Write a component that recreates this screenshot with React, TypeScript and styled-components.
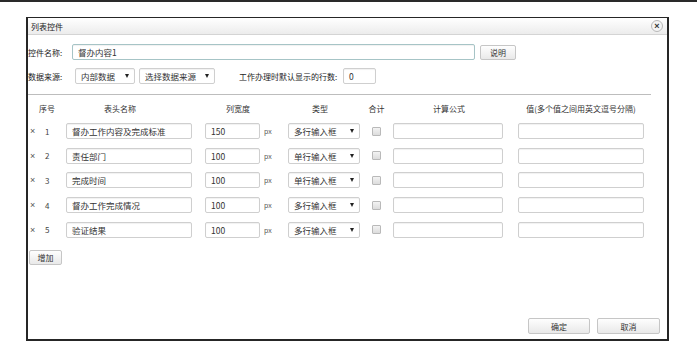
import styled, { createGlobalStyle, css } from 'styled-components';

const GlobalStyle = createGlobalStyle`
    html, body {
        margin: 0;
        padding: 0;
        background: #fff;
    }

    body {
        font-family: "Noto Sans CJK SC", "Liberation Sans", sans-serif;
        font-size: 8px;
        color: #333;
    }
`;

const Page = styled.div`
    width: 697px;
    height: 342px;
    box-sizing: border-box;
    border-top: 2px solid #2a2a2a;
    padding: 15px 0 0 26px;
    overflow: hidden;
`;

const Dialog = styled.div`
    display: flex;
    flex-direction: column;
    width: 643px;
    height: 324px;
    box-sizing: border-box;
    border: 2px solid #262626;
    border-top-width: 1px;
    background: #fff;
`;

const TitleBar = styled.div`
    display: flex;
    align-items: center;
    justify-content: space-between;
    height: 16px;
    padding: 0 4px 0 3px;
    background: linear-gradient(#ffffff, #ececec);
    border-bottom: 1px solid #d4d4d4;
`;

const Title = styled.span`
    font-size: 8px;
    color: #222;
`;

const CloseButton = styled.span`
    display: flex;
    align-items: center;
    justify-content: center;
    width: 10px;
    height: 10px;
    border: 1px solid #b8b8b8;
    border-radius: 50%;
    background: #f4f4f4;
    color: #333;
    font-family: "Liberation Sans", sans-serif;
    font-size: 9px;
    font-weight: bold;
    line-height: 1;
`;

const Body = styled.div`
    display: flex;
    flex-direction: column;
    flex: 1;
    padding: 9px 0 5px 0;
`;

const FormRow = styled.div`
    display: flex;
    align-items: center;
    height: 16px;
    margin-bottom: 8px;
`;

const Label = styled.span<{ w: number; gap?: number }>`
    width: ${({ w }) => w}px;
    margin-left: ${({ gap }) => gap ?? 0}px;
    white-space: nowrap;
    color: #222;
`;

const fieldBox = css`
    box-sizing: border-box;
    height: 16px;
    border: 1px solid #cfcfcf;
    border-radius: 2px;
    background: #fff;
    box-shadow: inset 0 1px 1px rgba(0, 0, 0, 0.06);
    font-family: "Noto Sans CJK SC", "Liberation Sans", sans-serif;
    font-size: 8.5px;
    color: #333;
`;

const TextField = styled.div<{ w: number; focused?: boolean }>`
    ${fieldBox};
    display: flex;
    align-items: center;
    width: ${({ w }) => w}px;
    padding: 0 5px;
    white-space: nowrap;

    ${({ focused }) => focused && css`
        border-color: #a6c4c6;
    `}
`;

const Select = styled.div<{ w: number; gap?: number }>`
    ${fieldBox};
    display: flex;
    align-items: center;
    justify-content: space-between;
    width: ${({ w }) => w}px;
    margin-left: ${({ gap }) => gap ?? 0}px;
    padding: 0 5px 0 5px;
    white-space: nowrap;
`;

const Arrow = styled.span`
    width: 0;
    height: 0;
    border-left: 2.5px solid transparent;
    border-right: 2.5px solid transparent;
    border-top: 4px solid #222;
`;

const Button = styled.div<{ w: number; h?: number }>`
    display: flex;
    align-items: center;
    justify-content: center;
    box-sizing: border-box;
    width: ${({ w }) => w}px;
    height: ${({ h }) => h ?? 15}px;
    border: 1px solid #c6c6c6;
    border-radius: 2px;
    background: linear-gradient(#fefefe, #e9e9e9);
    color: #333;
    font-size: 8px;
`;

const InfoButton = styled(Button)`
    margin-left: 5px;
`;

const Separator = styled.div`
    width: 623px;
    height: 1px;
    margin: 2px 0 7px 0;
    background: #bdbdbd;
`;

const columns = css`
    display: grid;
    grid-template-columns: 38px 133px 85px 82px 21px 124px 140px;
`;

const HeaderRow = styled.div`
    ${columns};
    height: 13px;
    align-items: center;
    margin-bottom: 8px;
    color: #333;
`;

const HeaderCell = styled.span<{ shift?: number }>`
    text-align: center;
    white-space: nowrap;
    padding-right: ${({ shift }) => shift ?? 0}px;
`;

const Table = styled.div`
    ${columns};
    grid-auto-rows: 16px;
    row-gap: 8.7px;
    align-items: center;
`;

const IndexCell = styled.div`
    display: flex;
    align-items: center;
    padding-left: 2px;
    color: #444;
`;

const Remove = styled.span`
    width: 15px;
    font-family: "Liberation Sans", sans-serif;
    font-size: 9px;
    color: #555;
`;

const Cell = styled.div<{ pad: number }>`
    display: flex;
    align-items: center;
    padding-left: ${({ pad }) => pad}px;
`;

const Unit = styled.span`
    margin-left: 4px;
    font-size: 7px;
    color: #555;
`;

const Check = styled.span`
    width: 7px;
    height: 7px;
    margin-left: 6px;
    border: 1px solid #b9b9b9;
    border-radius: 1px;
    background: linear-gradient(#f3f3f3, #dcdcdc);
`;

const AddButton = styled(Button)`
    margin: 12px 0 0 1px;
`;

const Footer = styled.div`
    display: flex;
    justify-content: flex-end;
    gap: 7px;
    margin-top: auto;
    padding-right: 7px;
`;

const rows = [
    { name: '督办工作内容及完成标准', width: '150', type: '多行输入框' },
    { name: '责任部门', width: '100', type: '单行输入框' },
    { name: '完成时间', width: '100', type: '单行输入框' },
    { name: '督办工作完成情况', width: '100', type: '多行输入框' },
    { name: '验证结果', width: '100', type: '多行输入框' },
];

export default function App() {
    return (
        <>
            <GlobalStyle />
            <Page>
                <Dialog>
                    <TitleBar>
                        <Title>列表控件</Title>
                        <CloseButton>×</CloseButton>
                    </TitleBar>

                    <Body>
                        <FormRow>
                            <Label w={44}>控件名称:</Label>
                            <TextField w={403} focused>督办内容1</TextField>
                            <InfoButton w={36}>说明</InfoButton>
                        </FormRow>

                        <FormRow>
                            <Label w={47}>数据来源:</Label>
                            <Select w={60}>内部数据<Arrow /></Select>
                            <Select w={76} gap={4}>选择数据来源<Arrow /></Select>
                            <Label w={104} gap={24}>工作办理时默认显示的行数:</Label>
                            <TextField w={33}>0</TextField>
                        </FormRow>

                        <Separator />

                        <HeaderRow>
                            <HeaderCell>序号</HeaderCell>
                            <HeaderCell shift={25}>表头名称</HeaderCell>
                            <HeaderCell shift={7}>列宽度</HeaderCell>
                            <HeaderCell shift={10}>类型</HeaderCell>
                            <HeaderCell>合计</HeaderCell>
                            <HeaderCell>计算公式</HeaderCell>
                            <HeaderCell>值(多个值之间用英文逗号分隔)</HeaderCell>
                        </HeaderRow>

                        <Table>
                            {rows.flatMap((row, i) => [
                                <IndexCell key={`i${i}`}>
                                    <Remove>×</Remove>
                                    {i + 1}
                                </IndexCell>,
                                <Cell key={`n${i}`} pad={0}>
                                    <TextField w={126}>{row.name}</TextField>
                                </Cell>,
                                <Cell key={`w${i}`} pad={6}>
                                    <TextField w={55}>{row.width}</TextField>
                                    <Unit>px</Unit>
                                </Cell>,
                                <Cell key={`t${i}`} pad={4}>
                                    <Select w={72}>{row.type}<Arrow /></Select>
                                </Cell>,
                                <Cell key={`c${i}`} pad={0}>
                                    <Check />
                                </Cell>,
                                <Cell key={`f${i}`} pad={6}>
                                    <TextField w={110} />
                                </Cell>,
                                <Cell key={`v${i}`} pad={7}>
                                    <TextField w={126} />
                                </Cell>,
                            ])}
                        </Table>

                        <AddButton w={33}>增加</AddButton>

                        <Footer>
                            <Button w={62} h={16}>确定</Button>
                            <Button w={63} h={16}>取消</Button>
                        </Footer>
                    </Body>
                </Dialog>
            </Page>
        </>
    );
}
